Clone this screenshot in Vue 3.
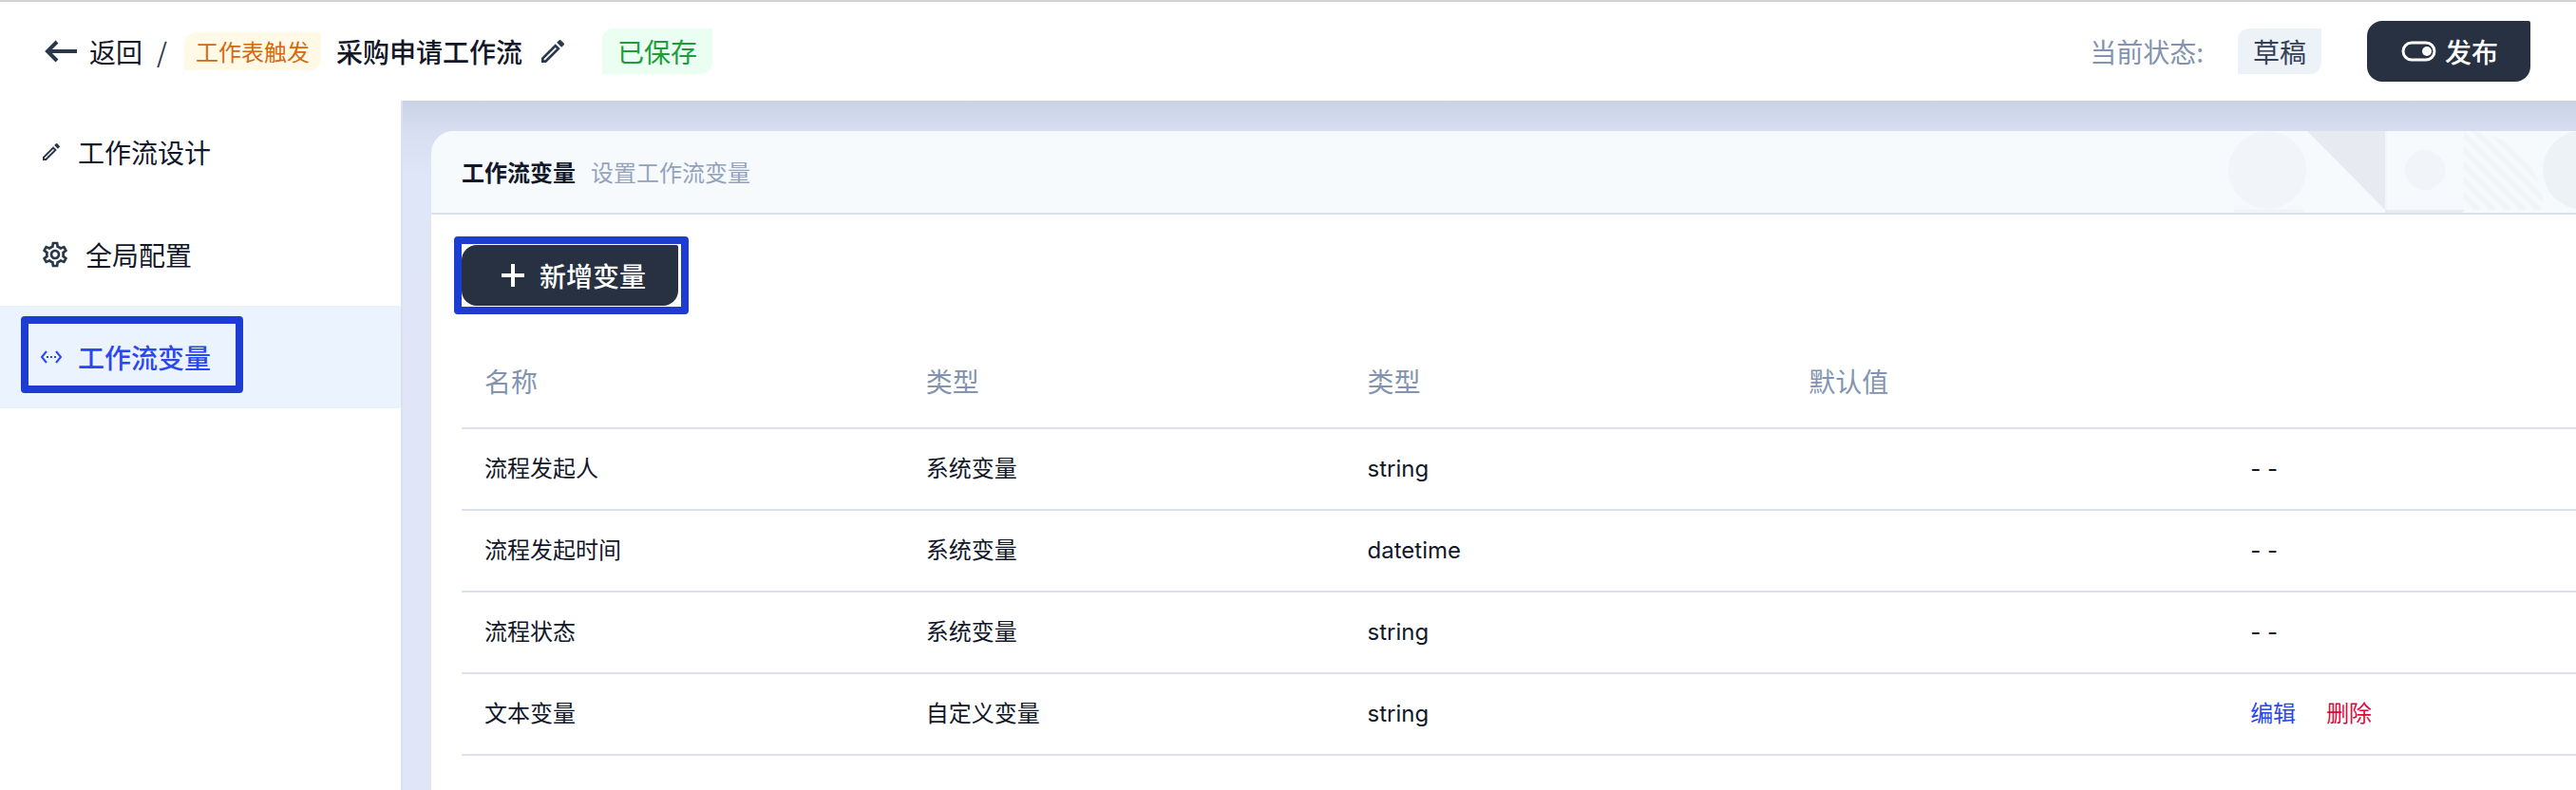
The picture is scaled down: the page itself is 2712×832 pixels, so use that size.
<script setup>
import { ref } from 'vue'

const active = ref('vars')
const menu = [
  { key: 'design', label: '工作流设计' },
  { key: 'config', label: '全局配置' },
  { key: 'vars', label: '工作流变量' },
]
const columns = ['名称', '类型', '类型', '默认值', '']
const rows = [
  { name: '流程发起人', kind: '系统变量', type: 'string', custom: false },
  { name: '流程发起时间', kind: '系统变量', type: 'datetime', custom: false },
  { name: '流程状态', kind: '系统变量', type: 'string', custom: false },
  { name: '文本变量', kind: '自定义变量', type: 'string', custom: true },
]
const pencil =
  'M3 17.25V21h3.75L17.81 9.94l-3.75-3.75L3 17.25zM5.92 19H5v-.92l9.06-9.06.92.92L5.92 19zM20.71 5.63l-2.34-2.34c-.2-.2-.45-.29-.71-.29s-.51.1-.7.29l-1.83 1.83 3.75 3.75 1.83-1.83c.39-.39.39-1.02 0-1.41z'
const gear =
  'M19.43 12.98c.04-.32.07-.64.07-.98 0-.34-.03-.66-.07-.98l2.11-1.65c.19-.15.24-.42.12-.64l-2-3.46c-.09-.16-.26-.25-.44-.25-.06 0-.12.01-.17.03l-2.49 1c-.52-.4-1.08-.73-1.69-.98l-.38-2.65C14.46 2.18 14.25 2 14 2h-4c-.25 0-.46.18-.49.42l-.38 2.65c-.61.25-1.17.59-1.69.98l-2.49-1c-.06-.02-.12-.03-.18-.03-.17 0-.34.09-.43.25l-2 3.46c-.13.22-.07.49.12.64l2.11 1.65c-.04.32-.07.65-.07.98 0 .33.03.66.07.98l-2.11 1.65c-.19.15-.24.42-.12.64l2 3.46c.09.16.26.25.44.25.06 0 .12-.01.17-.03l2.49-1c.52.4 1.08.73 1.69.98l.38 2.65c.03.24.24.42.49.42h4c.25 0 .46-.18.49-.42l.38-2.65c.61-.25 1.17-.59 1.69-.98l2.49 1c.06.02.12.03.18.03.17 0 .34-.09.43-.25l2-3.46c.12-.22.07-.49-.12-.64l-2.11-1.65zm-1.98-1.71c.04.31.05.52.05.73 0 .21-.02.43-.05.73l-.14 1.13.89.7 1.08.84-.7 1.21-1.27-.51-1.04-.42-.9.68c-.43.32-.84.56-1.25.73l-1.06.43-.16 1.13-.2 1.35h-1.4l-.19-1.35-.16-1.13-1.06-.43c-.43-.18-.83-.41-1.23-.71l-.91-.7-1.06.43-1.27.51-.7-1.21 1.08-.84.89-.7-.14-1.13c-.03-.31-.05-.54-.05-.74s.02-.43.05-.73l.14-1.13-.89-.7-1.08-.84.7-1.21 1.27.51 1.04.42.9-.68c.43-.32.84-.56 1.25-.73l1.06-.43.16-1.13.2-1.35h1.39l.19 1.35.16 1.13 1.06.43c.43.18.83.41 1.23.71l.91.7 1.06-.43 1.27-.51.7 1.21-1.07.85-.89.7.14 1.13zM12 8c-2.21 0-4 1.79-4 4s1.79 4 4 4 4-1.79 4-4-1.79-4-4-4zm0 6c-1.1 0-2-.9-2-2s.9-2 2-2 2 .9 2 2-.9 2-2 2z'
</script>

<template>
  <div class="page">
    <header class="topbar">
      <div class="crumbs">
        <button type="button" class="back">
          <svg width="40" height="40" viewBox="0 0 40 40" fill="none" stroke="currentColor" stroke-width="4">
            <path d="M37 20H6M16 10L6 20l10 10" />
          </svg>
          <span>返回</span>
        </button>
        <span class="slash">/</span>
        <span class="tag trigger">工作表触发</span>
        <h1 class="title">采购申请工作流</h1>
        <button type="button" class="rename" aria-label="编辑名称">
          <svg width="32" height="32" viewBox="0 0 24 24" fill="currentColor"><path :d="pencil" /></svg>
        </button>
        <span class="tag saved">已保存</span>
      </div>
      <div class="status">
        <span class="status-label">当前状态:</span>
        <span class="tag draft">草稿</span>
        <button type="button" class="primary">
          <svg width="40" height="40" viewBox="0 0 40 40">
            <rect x="4" y="11" width="33" height="18" rx="9" fill="none" stroke="currentColor" stroke-width="3" />
            <circle cx="29" cy="20" r="5" fill="currentColor" />
          </svg>
          <span>发布</span>
        </button>
      </div>
    </header>

    <div class="body">
      <nav class="sidebar">
        <a
          v-for="item in menu"
          :key="item.key"
          href="#"
          class="item"
          :class="{ active: active === item.key }"
          @click.prevent="active = item.key"
        >
          <svg v-if="item.key === 'design'" width="24" height="24" viewBox="0 0 24 24" fill="currentColor"><path :d="pencil" /></svg>
          <svg v-else-if="item.key === 'config'" width="32" height="32" viewBox="0 0 24 24" fill="currentColor"><path :d="gear" /></svg>
          <svg v-else width="24" height="24" viewBox="0 0 24 24" fill="none" stroke="currentColor" stroke-width="2">
            <path d="M7 6l-5 6 5 6M17 6l5 6-5 6" />
            <path d="M7 12h2M11 12h2M15 12h2" />
          </svg>
          <span>{{ item.label }}</span>
        </a>
      </nav>

      <main class="content">
        <section class="card">
          <div class="card-head">
            <h2>工作流变量</h2>
            <p>设置工作流变量</p>
            <svg class="pattern" width="368" height="86" viewBox="0 0 368 86">
              <defs>
                <clipPath id="quarter"><path d="M250 0h2a83 83 0 0 1 82 83h-84z" /></clipPath>
              </defs>
              <circle cx="43" cy="41" r="41" fill="#f1f4f8" />
              <path d="M8 84h74" stroke="#f0f4f7" stroke-width="3" />
              <path d="M85 0h82v83z" fill="#e7eaf1" />
              <path d="M168 0v83" stroke="#eef1f7" stroke-width="1" />
              <circle cx="209" cy="41" r="21" fill="#f1f4f8" />
              <path d="M167 83h84l-3 3h-81z" fill="#e6edf1" />
              <path
                clip-path="url(#quarter)"
                d="M246 -64l90 90M246 -48l90 90M246 -32l90 90M246 -16l90 90M246 0l90 90M246 16l90 90M246 32l90 90M246 48l90 90M246 64l90 90"
                stroke="#f2f4f8"
                stroke-width="6"
              />
              <circle cx="374" cy="41" r="41" fill="#edf2f6" />
            </svg>
          </div>
          <div class="card-body">
            <div class="marked">
              <button type="button" class="primary">
                <svg width="40" height="40" viewBox="0 0 40 40" fill="none" stroke="currentColor" stroke-width="4">
                  <path d="M20 8v24M8 20h24" />
                </svg>
                <span>新增变量</span>
              </button>
            </div>
            <table class="grid">
              <thead>
                <tr>
                  <th v-for="(c, i) in columns" :key="i" scope="col">{{ c }}</th>
                </tr>
              </thead>
              <tbody>
                <tr v-for="row in rows" :key="row.name">
                  <td>{{ row.name }}</td>
                  <td>{{ row.kind }}</td>
                  <td>{{ row.type }}</td>
                  <td></td>
                  <td>
                    <div v-if="row.custom" class="actions">
                      <button type="button" class="edit">编辑</button>
                      <button type="button" class="remove">删除</button>
                    </div>
                    <template v-else>- -</template>
                  </td>
                </tr>
              </tbody>
            </table>
          </div>
        </section>
      </main>
    </div>
  </div>
</template>

<style>
body {
  margin: 0;
}
</style>

<style scoped>
.page {
  display: flex;
  flex-direction: column;
  min-height: 100vh;
  box-sizing: border-box;
  border-top: 2px solid #d4d4d4;
  background: #fff;
  color: #121829;
  font-family: "Noto Sans CJK SC", sans-serif;
  font-size: 28px;
  line-height: 40px;
}
button {
  margin: 0;
  padding: 0;
  border: 0;
  background: none;
  color: inherit;
  font: inherit;
  cursor: pointer;
}
svg {
  display: block;
  flex: none;
}
h1,
h2,
p {
  margin: 0;
}
.topbar {
  display: flex;
  align-items: center;
  justify-content: space-between;
  height: 104px;
  padding: 0 48px 0 44px;
  white-space: nowrap;
}
.crumbs,
.status {
  display: flex;
  align-items: center;
}
.back {
  display: flex;
  align-items: center;
  gap: 10px;
}
.back svg,
.rename {
  color: #2a384c;
}
.slash {
  margin: 0 18px 0 15px;
  color: #2a384c;
}
.tag {
  padding: 4px 16px;
  border-radius: 12px 0 12px 0;
}
.trigger {
  padding: 0 12px;
  background: #fff9e6;
  color: #d46a10;
  font-size: 24px;
}
.title {
  margin: 0 16px;
  font-size: 28px;
  font-weight: 500;
}
.saved {
  margin-left: 36px;
  background: #ebfef2;
  color: #209c3c;
}
.status-label {
  color: #8294b0;
}
.draft {
  margin: 0 48px 0 36px;
  background: #edf1f8;
  color: #334257;
}
.primary {
  display: flex;
  align-items: center;
  gap: 8px;
  height: 64px;
  padding: 0 34px;
  border-radius: 16px 2px 16px 16px;
  background: #273142;
  color: #fff;
  font-weight: 500;
}
.body {
  display: flex;
  flex: 1;
}
.sidebar {
  flex: none;
  width: 422px;
  border-right: 2px solid #dbe2ef;
}
.item {
  position: relative;
  display: flex;
  align-items: center;
  gap: 16px;
  height: 108px;
  padding: 0 42px;
  color: inherit;
  text-decoration: none;
}
.item svg {
  color: #2a384c;
}
.item.active {
  background: #ebf3ff;
  color: #2b47f0;
  font-weight: 500;
}
.item.active svg {
  color: inherit;
}
.item.active::after {
  content: "";
  position: absolute;
  top: 11px;
  left: 22px;
  width: 218px;
  height: 65px;
  border: 8px solid #1d3cd2;
  border-radius: 4px;
}
.content {
  display: flex;
  flex: 1;
  min-width: 0;
  padding: 32px 0 0 30px;
  background: linear-gradient(#cad3e6 0, #d6def0 32px, #dee6f7 80px, #e0e6f8 240px);
}
.card {
  flex: 1;
  min-width: 0;
  border-radius: 24px 0 0 0;
  background: #fff;
  overflow: hidden;
}
.card-head {
  display: flex;
  align-items: center;
  gap: 16px;
  height: 86px;
  padding-left: 32px;
  border-bottom: 2px solid #dbe2ee;
  background: #f6fafd;
  font-size: 24px;
}
.card-head h2 {
  font-size: 24px;
  font-weight: 700;
}
.card-head p {
  color: #94a3bb;
}
.pattern {
  margin-left: auto;
}
.card-body {
  padding: 32px 0 0 32px;
}
.marked {
  position: relative;
  width: max-content;
}
.marked::after {
  content: "";
  position: absolute;
  inset: -9px -11px -9px -8px;
  border: 8px solid #1d3cd2;
  border-radius: 4px;
  pointer-events: none;
}
.grid {
  width: 100%;
  margin-top: 30px;
  border-collapse: separate;
  border-spacing: 0;
  table-layout: fixed;
}
.grid th,
.grid td {
  box-sizing: border-box;
  padding: 0 24px;
  border-bottom: 2px solid #dbe2ee;
  text-align: left;
}
.grid th {
  width: 20.88%;
  height: 100px;
  color: #8294b0;
  font-weight: 400;
}
.grid th:last-child {
  width: auto;
}
.grid td {
  height: 86px;
  font-family: Inter, "Noto Sans CJK SC", sans-serif;
  font-size: 24px;
}
.actions {
  display: flex;
  gap: 32px;
}
.edit {
  color: #2b47f0;
}
.remove {
  color: #dc0a3c;
}
</style>
